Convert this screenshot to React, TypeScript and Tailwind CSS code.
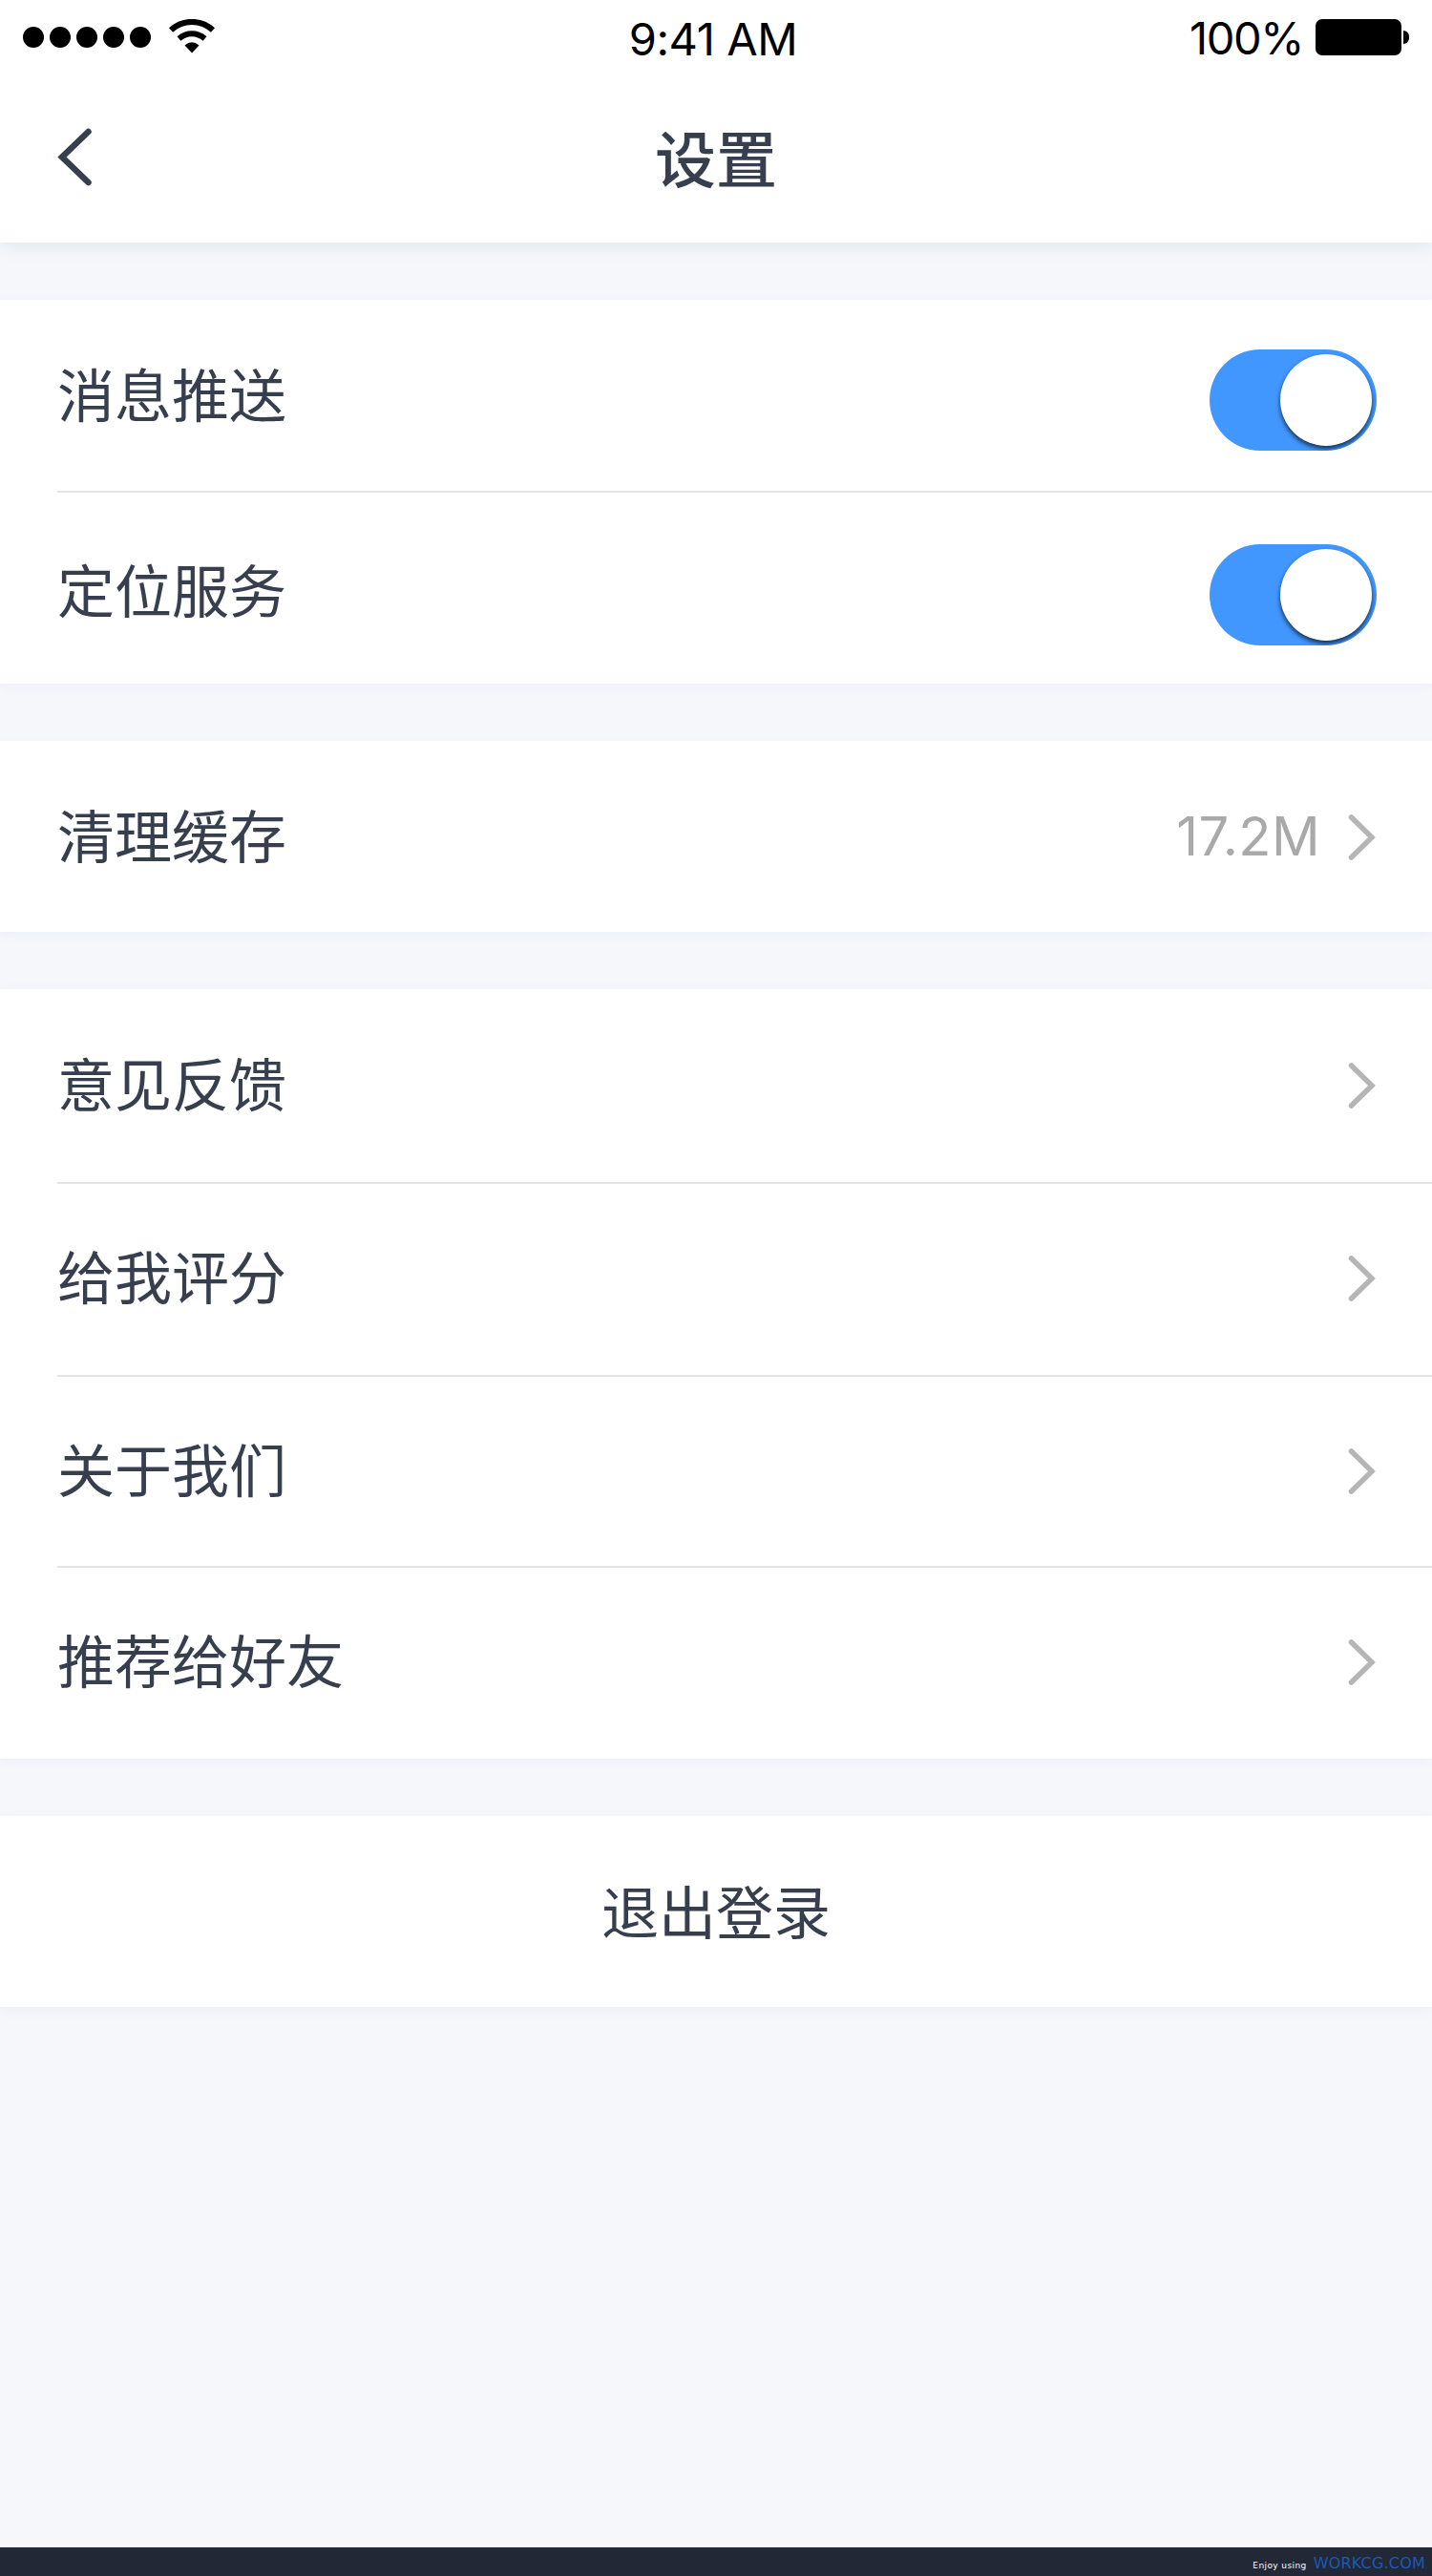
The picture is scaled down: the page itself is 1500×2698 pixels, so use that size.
import { useState } from "react";

const StatusBar = () => {
    return (
        <div className="grid h-[80px] grid-cols-3 font-['Inter'] text-[47px] leading-[82px] text-black">
            <div className="flex items-start pl-6">
                <div className="flex gap-1.5 pt-7">
                    <div className="size-[22px] rounded-full bg-black"></div>
                    <div className="size-[22px] rounded-full bg-black"></div>
                    <div className="size-[22px] rounded-full bg-black"></div>
                    <div className="size-[22px] rounded-full bg-black"></div>
                    <div className="size-[22px] rounded-full bg-black"></div>
                </div>
                <svg
                    className="mt-5 ml-[19px] h-9 w-12"
                    viewBox="0 0 48 36"
                    fill="none"
                    stroke="#000"
                >
                    <path d="M2 11.5C14.5 0 33.500 0 46 11.500" strokeWidth="6" />
                    <path d="M10.500 20.500C18.500 13.500 29.500 13.500 37.500 20.500" strokeWidth="6" />
                    <path d="M16.500 27.500Q24 21 31.500 27.500L24 35.500Z" fill="#000" stroke="none" />
                </svg>
            </div>
            <div className="pr-1.5 text-center tracking-[-0.4px]">9:41 AM</div>
            <div className="flex items-start justify-end pr-6">
                <div className="leading-[80px] tracking-[-1.4px]">100%</div>
                <div className="mt-5 ml-[13px] h-[38px] w-[90px] rounded-[7px] bg-black"></div>
                <div className="mt-8 ml-0.5 h-[14px] w-1.5 rounded-r-full bg-black"></div>
            </div>
        </div>
    );
};

const Chevron = () => {
    return (
        <svg
            className="mr-px h-[50px] w-[30px]"
            viewBox="0 0 30 50"
            fill="none"
            stroke="#b5b5b5"
            strokeWidth="5.500"
            strokeLinecap="round"
        >
            <path d="M4.500 4L26 25L4.500 46" />
        </svg>
    );
};

const Toggle = () => {
    const [on, setOn] = useState(true);

    return (
        <button
            className={
                on
                    ? "flex h-[106px] w-[175px] justify-end overflow-hidden rounded-full bg-[#4297ff] p-[5px]"
                    : "flex h-[106px] w-[175px] justify-start overflow-hidden rounded-full bg-gray-300 p-[5px]"
            }
            onClick={() => setOn(!on)}
        >
            <div className="size-24 rounded-full bg-white shadow-[0_3px_5px_rgba(0,0,0,0.7)]"></div>
        </button>
    );
};

const Divider = () => <div className="ml-[60px] h-0.5 bg-[#e4e4e4]"></div>;

const cardClass = "bg-white shadow-[0_3px_12px_rgba(60,100,110,0.05)]";

const App = () => {
    return (
        <div className="flex h-[2698px] w-[1500px] flex-col bg-[#f5f7fb] font-['Noto_Sans_CJK_SC',sans-serif] text-[60px] leading-[90px] text-[#373e4d]">
            {/* Header */}
            <div className="h-[254px] bg-white shadow-[0_4px_18px_rgba(60,100,110,0.1)]">
                <StatusBar />
                <div className="grid h-[174px] grid-cols-3 items-start">
                    <svg
                        className="mt-[52px] ml-[60px] h-16 w-10"
                        viewBox="0 0 40 64"
                        fill="none"
                        stroke="#373e4d"
                        strokeWidth="6.500"
                        strokeLinecap="round"
                    >
                        <path d="M32.500 6L5 32.500L32.500 59" />
                    </svg>
                    <h1 className="pt-[38px] text-center text-[64px] font-medium">
                        设置
                    </h1>
                </div>
            </div>
            {/* Header END */}

            <div className={`mt-[60px] ${cardClass}`}>
                <div className="flex h-[200px] items-center justify-between pr-[58px] pl-[60px]">
                    <div className="pb-1.5">消息推送</div>
                    <div className="pt-[10px]">
                        <Toggle />
                    </div>
                </div>
                <Divider />
                <div className="flex h-[200px] items-center justify-between pr-[58px] pl-[60px]">
                    <div className="pb-px">定位服务</div>
                    <div className="pt-[13px]">
                        <Toggle />
                    </div>
                </div>
            </div>

            <div className={`mt-[60px] ${cardClass}`}>
                <div className="flex h-[200px] items-center justify-between pr-[58px] pl-[60px]">
                    <div className="pb-1.5">清理缓存</div>
                    <div className="flex items-center gap-[28px] pt-0.5">
                        <div className="pb-0.5 font-['Inter'] text-[56px] tracking-[0.5px] text-[#a9a9a9]">
                            17.2M
                        </div>
                        <Chevron />
                    </div>
                </div>
            </div>

            <div className={`mt-[60px] ${cardClass}`}>
                <div className="flex h-[202px] items-center justify-between pr-[58px] pl-[60px]">
                    <div className="pb-2">意见反馈</div>
                    <Chevron />
                </div>
                <Divider />
                <div className="flex h-[200px] items-center justify-between pr-[58px] pl-[60px]">
                    <div className="pb-2.5">给我评分</div>
                    <div className="pb-0.5">
                        <Chevron />
                    </div>
                </div>
                <Divider />
                <div className="flex h-[198px] items-center justify-between pr-[58px] pl-[60px]">
                    <div className="pb-2">关于我们</div>
                    <Chevron />
                </div>
                <Divider />
                <div className="flex h-[200px] items-center justify-between pr-[58px] pl-[60px]">
                    <div className="pb-2.5">推荐给好友</div>
                    <div className="pb-0.5">
                        <Chevron />
                    </div>
                </div>
            </div>

            <button
                className={`mt-[60px] flex h-[200px] items-center justify-center pb-[5px] ${cardClass}`}
            >
                退出登录
            </button>

            {/* Footer */}
            <div className="mt-auto flex h-[30px] justify-end bg-[#222835] pr-[7px] font-['DejaVu_Sans'] whitespace-nowrap">
                <div className="pt-[3px] text-[9px] leading-8 tracking-[0.4px] text-white">
                    Enjoy using
                </div>
                <div className="ml-[7px] text-[16px] leading-[34px] tracking-[0.2px] text-[#1b59b5]">
                    WORKCG.COM
                </div>
            </div>
        </div>
    );
};
export default App;
